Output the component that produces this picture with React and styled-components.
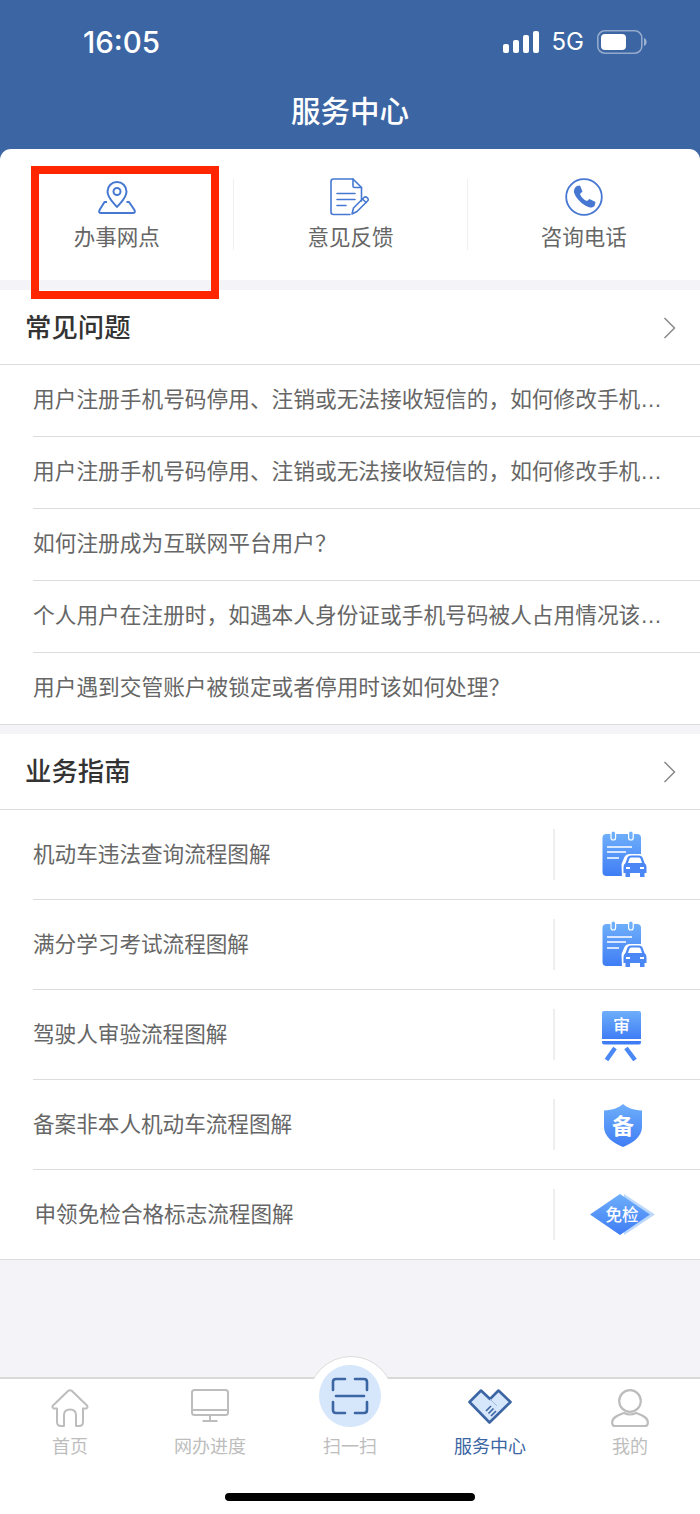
import React from 'react';
import styled, { createGlobalStyle } from 'styled-components';

const Global = createGlobalStyle`
  html, body { margin: 0; padding: 0; background: #f3f3f8; }
  * { box-sizing: border-box; }
`;

const FONT = `"Liberation Sans", "Noto Sans CJK SC", sans-serif`;

const Page = styled.div`
  position: relative;
  width: 700px;
  height: 1514px;
  overflow: hidden;
  display: flex;
  flex-direction: column;
  background: #f3f3f8;
  font-family: ${FONT};
`;
const Header = styled.header`
  height: 160px;
  flex: none;
  background: #3c65a3;
  color: #fff;
`;
const StatusBar = styled.div`
  height: 84px;
  padding: 0 53px 0 83px;
  display: flex;
  align-items: center;
  justify-content: space-between;
`;
const Time = styled.div`
  font-family: Inter, sans-serif;
  font-size: 29.5px;
  font-weight: 500;
  line-height: 1;
  margin-top: 2px;
`;
const StatusIcons = styled.div`
  display: flex;
  align-items: center;
  gap: 13px;
`;
const Net = styled.span`
  font-family: Inter, sans-serif;
  font-size: 24px;
  line-height: 1;
`;
const Title = styled.h1`
  margin: 0;
  text-align: center;
  font-size: 29.5px;
  font-weight: 500;
  line-height: 56px;
`;
const QuickCard = styled.section`
  flex: none;
  height: 131px;
  margin-top: -11px;
  background: #fff;
  border-radius: 11px 11px 0 0;
  padding-top: 30px;
  display: grid;
  grid-template-columns: repeat(3, 1fr);
  align-items: start;
`;
const QuickItem = styled.div`
  height: 71px;
  display: flex;
  flex-direction: column;
  align-items: center;
  justify-content: flex-start;
  border-left: ${p => (p.$first ? 'none' : '1px solid #f0f0f2')};
`;
const QuickIcon = styled.div`
  flex: none;
  height: 40px;
  margin-top: -2px;
  display: flex;
  align-items: center;
  justify-content: center;
`;
const QuickLabel = styled.span`
  flex: none;
  font-size: 21.5px;
  line-height: 24px;
  margin-top: 9px;
  color: #666;
`;
const Section = styled.section`
  flex: none;
  margin-top: ${p => p.$gap}px;
  background: #fff;
  border-bottom: 1px solid #dcdcdc;
`;
const SectionHead = styled.div`
  height: ${p => p.$h}px;
  padding: 0 24px 4px 25px;
  display: flex;
  align-items: center;
  justify-content: space-between;
  border-bottom: 1.5px solid #dcdcdc;
`;
const SectionTitle = styled.h2`
  margin: 0;
  font-size: 26.4px;
  font-weight: 500;
  color: #333;
`;
const ChevronBox = styled.div`
  display: flex;
  margin-top: 5px;
`;
const FaqRow = styled.div`
  height: ${p => (p.$last ? 71 : 72)}px;
  margin-left: 33px;
  padding-bottom: 6px;
  display: flex;
  align-items: center;
  border-bottom: ${p => (p.$last ? 'none' : '1.5px solid #dcdcdc')};
`;
const FaqText = styled.span`
  font-size: 21.7px;
  color: #666;
  white-space: nowrap;
`;
const GuideRow = styled.div`
  height: ${p => (p.$last ? 89 : 90)}px;
  margin-left: 33px;
  display: flex;
  align-items: center;
  border-bottom: ${p => (p.$last ? 'none' : '1.5px solid #dcdcdc')};
`;
const GuideText = styled.span`
  flex: 1;
  font-size: 21.6px;
  color: #666;
  padding-left: ${p => p.$indent || 0}px;
  padding-bottom: 4px;
`;
const GuideIcon = styled.div`
  flex: none;
  width: 147px;
  height: 51px;
  border-left: 2px solid #eeeeee;
  padding-left: ${p => p.$pad}px;
  padding-top: ${p => p.$top || 0}px;
  display: flex;
  align-items: center;
  justify-content: flex-start;
`;
const Spacer = styled.div`
  flex: 1;
`;
const TabBar = styled.nav`
  position: relative;
  flex: none;
  height: 137px;
  background: #fff;
  border-top: 2px solid #d9d9d9;
`;
const Bump = styled.div`
  position: absolute;
  left: 300px;
  top: -25px;
  width: 100px;
  height: 25px;
  overflow: hidden;
  &::before {
    content: '';
    position: absolute;
    left: 8px;
    top: 2px;
    width: 84px;
    height: 84px;
    border-radius: 50%;
    background: #fff;
    border: 1.5px solid #dcdcdc;
  }
`;
const Tabs = styled.div`
  position: relative;
  display: grid;
  grid-template-columns: repeat(5, 140px);
`;
const Tab = styled.div`
  display: flex;
  flex-direction: column;
  align-items: center;
  color: ${p => (p.$active ? '#3c65a3' : '#bdbdbd')};
`;
const TabIcon = styled.div`
  height: 54px;
  padding-top: 10px;
  display: flex;
  align-items: flex-start;
  justify-content: center;
`;
const ScanDisc = styled.div`
  width: 62px;
  height: 62px;
  margin-top: -24px;
  border-radius: 50%;
  background: #d6e6fb;
  display: flex;
  align-items: center;
  justify-content: center;
`;
const TabLabel = styled.span`
  font-size: 18px;
  line-height: 24px;
  margin-top: 2px;
`;
const HomeBar = styled.div`
  position: absolute;
  left: 225px;
  bottom: 13px;
  width: 250px;
  height: 8px;
  border-radius: 4px;
  background: #000;
`;
const RedBox = styled.div`
  position: absolute;
  left: 31px;
  top: 166px;
  width: 188px;
  height: 133px;
  border: 8px solid #ff2600;
`;

const Signal = () => (
  <svg width="36" height="22" viewBox="0 0 36 22" fill="#fff">
    <rect x="0" y="13" width="6" height="9" rx="2" />
    <rect x="10" y="9" width="6" height="13" rx="2" />
    <rect x="20" y="4" width="6" height="18" rx="2" />
    <rect x="30" y="0" width="6" height="22" rx="2" />
  </svg>
);
const Battery = () => (
  <svg width="50" height="24" viewBox="0 0 50 24">
    <rect x="0.8" y="0.8" width="44" height="22.4" rx="7" fill="none" stroke="#fff" strokeOpacity=".45" strokeWidth="1.6" />
    <rect x="4" y="4" width="25" height="16" rx="4" fill="#fff" />
    <path d="M47 8 C49 9 49.6 10.5 49.6 12 C49.6 13.5 49 15 47 16 Z" fill="#fff" fillOpacity=".5" />
  </svg>
);
const PinIcon = () => (
  <svg width="38" height="33" viewBox="0 0 38 33" fill="none" stroke="#4678d2" strokeWidth="2" strokeLinejoin="round">
    <path d="M9 21 H6.5 L1.5 29 Q0.5 32 3 32 H35 Q37.5 32 36.5 29 L31 21 H28.5" />
    <path d="M19 26 C15 21 9.5 17 9.5 10.5 A9.5 9.5 0 0 1 28.5 10.5 C28.5 17 23 21 19 26 Z" fill="#fff" />
    <circle cx="19" cy="10.5" r="3.5" />
  </svg>
);
const DocIcon = () => (
  <svg width="40" height="38" viewBox="0 0 40 38" fill="none" stroke="#4678d2" strokeWidth="1.6" strokeLinejoin="round" strokeLinecap="round">
    <path d="M20 36.5 H3.5 Q1 36.5 1 34 V3.5 Q1 1 3.5 1 H23 L31.5 9.5 V23" />
    <path d="M23 1 V8 Q23 9.5 24.5 9.5 H31.5" />
    <path d="M7 15.5 H25 M7 21.5 H25 M7 27.5 H16" />
    <path d="M22 36 L23.5 30 L34 19.5 Q35.5 18 37.5 20 Q39 21.8 37.5 23 L27 33.5 Z" />
    <path d="M32.5 21 L36 24.5" />
  </svg>
);
const PhoneIcon = () => (
  <svg width="38" height="38" viewBox="-19 -19 38 38" fill="none">
    <circle r="17.8" stroke="#4678d2" strokeWidth="1.8" />
    <path d="M-7 -11 L-4 -11.5 L-1.5 -5.5 L-4 -3 C-3 0 0 3 3 4 L5.5 2 L11.5 5 L10.5 9 C9 10.5 7 11 4.5 10 C-2 7.5 -8 1.5 -10 -4.5 C-10.5 -7 -9 -10 -7 -11 Z" fill="#4678d2" />
  </svg>
);
const Chevron = () => (
  <ChevronBox>
    <svg width="13" height="22" viewBox="0 0 13 22" fill="none" stroke="#8a8a8a" strokeWidth="1.5">
      <path d="M1.5 1 L11.5 11 L1.5 21" />
    </svg>
  </ChevronBox>
);
const Grad = ({ id }) => (
  <defs>
    <linearGradient id={id} x1="0" y1="0" x2="0" y2="1">
      <stop offset="0" stopColor="#6eaefa" />
      <stop offset="1" stopColor="#3f7df5" />
    </linearGradient>
  </defs>
);
const CarDocIcon = ({ id }) => (
  <svg width="46" height="47" viewBox="0 0 46 47">
    <Grad id={id} />
    <rect x="0.5" y="3" width="38.5" height="42" rx="4" fill={`url(#${id})`} />
    <rect x="9" y="0" width="4.6" height="9" rx="2.3" fill="#6eaefa" stroke="#fff" strokeWidth="1.2" />
    <rect x="26.6" y="0" width="4.6" height="9" rx="2.3" fill="#6eaefa" stroke="#fff" strokeWidth="1.2" />
    <path d="M5 16 H30 M5 21 H24 M5 27 H17" stroke="#fff" strokeWidth="1.7" />
    <path d="M19.5 33 L22.5 26 Q24 23 28 23 H38 Q42 23 43.5 26 L46 33 V47 H20 Z" fill="#fff" />
    <path d="M23.5 32 L25.5 26.5 Q26.5 24.5 29 24.5 H37 Q39.5 24.5 40.5 26.5 L42.5 32 Q44.5 33.5 44.5 36 V42 H42.5 V46 H38 V42 H28 V46 H23.5 V42 H21.5 V36 Q21.5 33.5 23.5 32 Z" fill="#4b88f5" />
    <path d="M26 32 L27.3 28 Q27.8 26.6 29.5 26.6 H36.5 Q38.2 26.6 38.7 28 L40 32 Z" fill="#fff" />
    <rect x="24" y="36" width="4" height="2" fill="#fff" />
    <rect x="38" y="36" width="4" height="2" fill="#fff" />
  </svg>
);
const ReviewIcon = () => (
  <svg width="41" height="50" viewBox="0 0 41 50">
    <Grad id="rv" />
    <path d="M3 0 H38 Q40 0 40 2 V28 H1 V2 Q1 0 3 0 Z" fill="url(#rv)" />
    <text x="20.5" y="20.5" textAnchor="middle" fontSize="17" fontWeight="500" fill="#fff" fontFamily={FONT}>审</text>
    <path d="M1 30 H40 V31 Q40 33.5 38 33.5 H3 Q1 33.5 1 31 Z" fill="#3f7df5" />
    <path d="M14 37 L5.5 49 M25 37 L34 49" stroke="#4a88f6" strokeWidth="4.4" />
  </svg>
);
const ShieldIcon = () => (
  <svg width="38" height="43" viewBox="0 0 38 43">
    <Grad id="sh" />
    <path d="M19 0 C23 3.5 29 6 38 6.5 V23 C38 33 28 39.5 19 43 C10 39.5 0 33 0 23 V6.5 C9 6 15 3.5 19 0 Z" fill="url(#sh)" />
    <text x="19" y="30" textAnchor="middle" fontSize="22" fontWeight="700" fill="#fff" fontFamily={FONT}>备</text>
  </svg>
);
const DiamondIcon = () => (
  <svg width="66" height="42" viewBox="0 0 66 42">
    <Grad id="dm" />
    <path d="M34 0 L65 20.5 L34 41 Z" fill="#bcd8fb" />
    <path d="M30 0 L60 20.5 L30 41 L0 20.5 Z" fill="url(#dm)" />
    <text x="32" y="26.5" textAnchor="middle" fontSize="16.5" fontWeight="500" fill="#fff" fontFamily={FONT}>免检</text>
  </svg>
);
const HomeIcon = () => (
  <svg width="38" height="38" viewBox="0 0 38 38" fill="none" stroke="#bdbdbd" strokeWidth="2" strokeLinejoin="round">
    <path d="M6 19.5 H3 Q0.6 19 2 16.5 L17 2 Q19 0.6 21 2 L36 16.5 Q37.2 19 35 19.5 H32 V33 Q32 37 28 37 H25 V26 Q25 20.5 19 20.5 Q13 20.5 13 26 V37 H10 Q6 37 6 33 Z" />
  </svg>
);
const MonitorIcon = () => (
  <svg width="38" height="33" viewBox="0 0 38 33" fill="none" stroke="#bdbdbd" strokeWidth="2">
    <rect x="1" y="1" width="36" height="25" rx="2.5" />
    <path d="M1 21 H37" />
    <path d="M19 26 V32 M11.5 32 H26.5" />
  </svg>
);
const ScanIcon = () => (
  <svg width="38" height="38" viewBox="0 0 38 38" fill="none" stroke="#3c65a3" strokeWidth="2.6" strokeLinecap="round">
    <path d="M14 2 H5 Q2 2 2 5 V13 M24 2 H33 Q36 2 36 5 V13 M14 36 H5 Q2 36 2 33 V25 M24 36 H33 Q36 36 36 33 V25" />
    <path d="M5 19 H33" />
  </svg>
);
const ShakeIcon = () => (
  <svg width="44" height="35" viewBox="0 0 44 35" fill="#d6e6fb" stroke="#3c65a3" strokeWidth="2.6" strokeLinejoin="round">
    <path d="M1.5 13 L13 1.5 L22 10 L30.5 1.5 L42.5 13 L21.5 33.5 Z" />
    <path d="M18 22 L23 17 M20.5 24.5 L25.5 19.5 M23 27 L28 22" strokeWidth="1.6" fill="none" />
    <path d="M22 10 L29 17" strokeWidth="1" fill="none" stroke="#9db8dc" />
  </svg>
);
const UserIcon = () => (
  <svg width="38" height="38" viewBox="0 0 38 38" fill="none" stroke="#bdbdbd" strokeWidth="2.2">
    <circle cx="19" cy="12" r="10.8" />
    <path d="M13 24 C8 26 1.5 28 1.2 33 Q1 37 4 37 H34 Q37 37 36.8 33 C36.5 28 30 26 25 24 Q19 27 13 24 Z" />
  </svg>
);

const QUICK = [
  { label: '办事网点', icon: <PinIcon /> },
  { label: '意见反馈', icon: <DocIcon /> },
  { label: '咨询电话', icon: <PhoneIcon /> },
];
const FAQ = [
  '用户注册手机号码停用、注销或无法接收短信的，如何修改手机…',
  '用户注册手机号码停用、注销或无法接收短信的，如何修改手机…',
  '如何注册成为互联网平台用户？',
  '个人用户在注册时，如遇本人身份证或手机号码被人占用情况该…',
  '用户遇到交管账户被锁定或者停用时该如何处理？',
];
const GUIDES = [
  { label: '机动车违法查询流程图解', icon: <CarDocIcon id="c1" />, pad: 47 },
  { label: '满分学习考试流程图解', icon: <CarDocIcon id="c2" />, pad: 47 },
  { label: '驾驶人审验流程图解', icon: <ReviewIcon />, pad: 46, top: 2 },
  { label: '备案非本人机动车流程图解', icon: <ShieldIcon />, pad: 49, top: 2 },
  { label: '申领免检合格标志流程图解', icon: <DiamondIcon />, pad: 35, indent: 1.5 },
];
const TABS = [
  { label: '首页', icon: <HomeIcon /> },
  { label: '网办进度', icon: <MonitorIcon /> },
  { label: '扫一扫', scan: true },
  { label: '服务中心', icon: <ShakeIcon />, active: true },
  { label: '我的', icon: <UserIcon /> },
];

export default function App() {
  return (
    <Page>
      <Global />
      <Header>
        <StatusBar>
          <Time>16:05</Time>
          <StatusIcons>
            <Signal />
            <Net>5G</Net>
            <Battery />
          </StatusIcons>
        </StatusBar>
        <Title>服务中心</Title>
      </Header>
      <QuickCard>
        {QUICK.map((q, i) => (
          <QuickItem key={q.label} $first={i === 0}>
            <QuickIcon>{q.icon}</QuickIcon>
            <QuickLabel>{q.label}</QuickLabel>
          </QuickItem>
        ))}
      </QuickCard>
      <Section $gap={10}>
        <SectionHead $h={75}>
          <SectionTitle>常见问题</SectionTitle>
          <Chevron />
        </SectionHead>
        {FAQ.map((t, i) => (
          <FaqRow key={i} $last={i === FAQ.length - 1}>
            <FaqText>{t}</FaqText>
          </FaqRow>
        ))}
      </Section>
      <Section $gap={9}>
        <SectionHead $h={76}>
          <SectionTitle>业务指南</SectionTitle>
          <Chevron />
        </SectionHead>
        {GUIDES.map((g, i) => (
          <GuideRow key={g.label} $last={i === GUIDES.length - 1}>
            <GuideText $indent={g.indent}>{g.label}</GuideText>
            <GuideIcon $pad={g.pad} $top={g.top}>{g.icon}</GuideIcon>
          </GuideRow>
        ))}
      </Section>
      <Spacer />
      <TabBar>
        <Bump />
        <Tabs>
          {TABS.map(t => (
            <Tab key={t.label} $active={t.active}>
              <TabIcon>
                {t.scan ? (
                  <ScanDisc>
                    <ScanIcon />
                  </ScanDisc>
                ) : (
                  t.icon
                )}
              </TabIcon>
              <TabLabel>{t.label}</TabLabel>
            </Tab>
          ))}
        </Tabs>
        <HomeBar />
      </TabBar>
      <RedBox />
    </Page>
  );
}
